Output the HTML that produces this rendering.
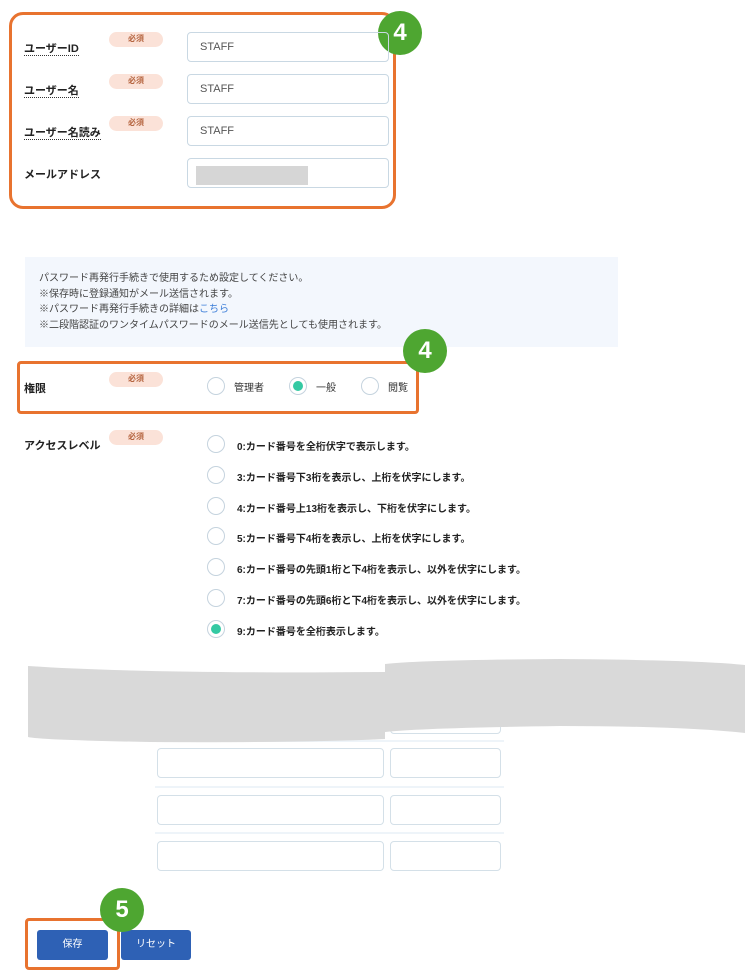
<!DOCTYPE html>
<html><head><meta charset="utf-8"><style>
body{margin:0;width:745px;height:978px;background:#fff;position:relative;font-family:"Liberation Sans","Noto Sans CJK JP",sans-serif;overflow:hidden}
.a{position:absolute}
.lbl{position:absolute;left:24px;font-size:11px;font-weight:bold;color:#222}
.dot{border-bottom:1px dotted #333}
.badge{position:absolute;width:54px;height:15px;background:#fbe2d8;border-radius:8px;color:#b5643f;font-size:8px;text-align:center;line-height:13px;font-weight:bold}
.inp{position:absolute;left:187px;width:200px;height:28px;border:1px solid #c9d8e3;border-radius:4px;font-size:11px;color:#555;line-height:28px;padding-left:12px;box-sizing:border-box;width:202px;height:30px}
.g{position:absolute;width:44px;height:44px;border-radius:50%;background:#4ea631;color:#fff;font-weight:bold;font-size:24px;text-align:center;line-height:44px}
.r{position:absolute;width:18px;height:18px;border:1px solid #c5d3de;border-radius:50%;box-sizing:border-box;background:#fff}
.r.on::after{content:"";position:absolute;left:3px;top:3px;width:10px;height:10px;border-radius:50%;background:#34c9a3}
.opt{position:absolute;left:237px;font-size:10px;font-weight:bold;color:#222}
.bx{position:absolute;border:1px solid #d4e0e8;border-radius:4px;height:30px;box-sizing:border-box}
.hr{position:absolute;left:155px;width:349px;height:2px;background:#eef4f9}
.btn{position:absolute;top:930px;width:71px;height:30px;background:#2e61b5;border-radius:3px;color:#fff;font-size:10px;text-align:center;line-height:30px}
</style></head><body>
<div class="a" style="left:9px;top:12px;width:381px;height:191px;border:3px solid #e8732f;border-radius:14px"></div>
<div class="g" style="left:378px;top:11px">4</div>
<div class="lbl" style="top:40px"><span class="dot">ユーザーID</span></div>
<div class="lbl" style="top:82px"><span class="dot">ユーザー名</span></div>
<div class="lbl" style="top:124px"><span class="dot">ユーザー名読み</span></div>
<div class="lbl" style="top:166px">メールアドレス</div>
<div class="badge" style="left:109px;top:32px">必須</div>
<div class="badge" style="left:109px;top:74px">必須</div>
<div class="badge" style="left:109px;top:116px">必須</div>
<div class="inp" style="top:32px">STAFF</div>
<div class="inp" style="top:74px">STAFF</div>
<div class="inp" style="top:116px">STAFF</div>
<div class="inp" style="top:158px"><div class="a" style="left:8px;top:7px;width:112px;height:19px;background:#d6d6d6"></div></div>

<div class="a" style="left:25px;top:257px;width:593px;height:90px;background:#f3f7fd;font-size:10px;color:#444;line-height:15.5px;padding:14px 0 0 14px;box-sizing:border-box">パスワード再発行手続きで使用するため設定してください。<br>※保存時に登録通知がメール送信されます。<br>※パスワード再発行手続きの詳細は<span style="color:#3b7dd8">こちら</span><br>※二段階認証のワンタイムパスワードのメール送信先としても使用されます。</div>

<div class="a" style="left:17px;top:361px;width:396px;height:47px;border:3px solid #e8732f;border-radius:4px"></div>
<div class="g" style="left:403px;top:329px">4</div>
<div class="lbl" style="top:380px">権限</div>
<div class="badge" style="left:109px;top:372px">必須</div>
<div class="r" style="left:207px;top:377px"></div><div class="a" style="left:234px;top:379px;font-size:10px;color:#333">管理者</div>
<div class="r on" style="left:289px;top:377px"></div><div class="a" style="left:316px;top:379px;font-size:10px;color:#333">一般</div>
<div class="r" style="left:361px;top:377px"></div><div class="a" style="left:388px;top:379px;font-size:10px;color:#333">閲覧</div>

<div class="lbl" style="top:437px">アクセスレベル</div>
<div class="badge" style="left:109px;top:430px">必須</div>
<div class="r" style="left:207px;top:435px"></div><div class="opt" style="top:438px">0:カード番号を全桁伏字で表示します。</div>
<div class="r" style="left:207px;top:466px"></div><div class="opt" style="top:469px">3:カード番号下3桁を表示し、上桁を伏字にします。</div>
<div class="r" style="left:207px;top:497px"></div><div class="opt" style="top:500px">4:カード番号上13桁を表示し、下桁を伏字にします。</div>
<div class="r" style="left:207px;top:527px"></div><div class="opt" style="top:530px">5:カード番号下4桁を表示し、上桁を伏字にします。</div>
<div class="r" style="left:207px;top:558px"></div><div class="opt" style="top:561px">6:カード番号の先頭1桁と下4桁を表示し、以外を伏字にします。</div>
<div class="r" style="left:207px;top:589px"></div><div class="opt" style="top:592px">7:カード番号の先頭6桁と下4桁を表示し、以外を伏字にします。</div>
<div class="r on" style="left:207px;top:620px"></div><div class="opt" style="top:623px">9:カード番号を全桁表示します。</div>

<div class="bx" style="left:390px;top:710px;width:111px;height:24px"></div>
<div class="hr" style="top:740px"></div>
<div class="bx" style="left:157px;top:748px;width:227px"></div><div class="bx" style="left:390px;top:748px;width:111px"></div>
<div class="hr" style="top:786px"></div>
<div class="bx" style="left:157px;top:795px;width:227px"></div><div class="bx" style="left:390px;top:795px;width:111px"></div>
<div class="hr" style="top:832px"></div>
<div class="bx" style="left:157px;top:841px;width:227px"></div><div class="bx" style="left:390px;top:841px;width:111px"></div>

<svg class="a" style="left:0;top:0" width="745" height="978"><path d="M28 666 Q150 674 385 672 L385 664 Q420 660 560 659 Q700 660 745 665 L745 733 Q680 726 560 726 Q420 728 385 732 L385 739 Q300 743 150 742 Q40 740 28 737 Z" fill="#d9d9d9"/></svg>

<div class="a" style="left:25px;top:918px;width:89px;height:46px;border:3px solid #e8732f;border-radius:4px"></div>
<div class="btn" style="left:37px">保存</div>
<div class="btn" style="left:121px;width:70px">リセット</div>
<div class="g" style="left:100px;top:888px">5</div>
</body></html>
